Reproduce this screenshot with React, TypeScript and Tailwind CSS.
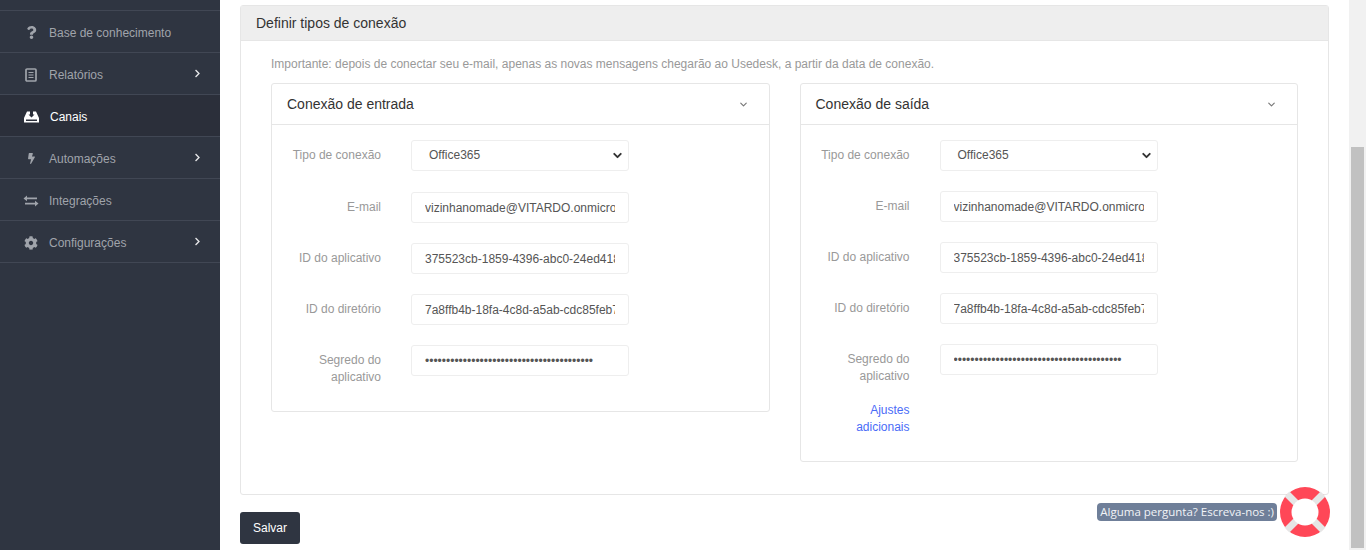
import { FaQuestion, FaBolt, FaCog, FaChevronRight } from "react-icons/fa"
import { ChevronDown } from "lucide-react"
import type { ReactNode } from "react"

const font = "font-['Liberation_Sans',Arial,sans-serif]"

const ReportIcon = () => (
  <svg width="12" height="14" viewBox="0 0 12 14" fill="none" stroke="currentColor">
    <rect x="1" y="1" width="10" height="12" rx="1" strokeWidth="1.7" />
    <path d="M3.5 4.5h5M3.5 7h5M3.5 9.5h5" strokeWidth="1.2" />
  </svg>
)

const SwapIcon = () => (
  <svg width="16" height="12" viewBox="0 0 16 12" fill="currentColor">
    <path d="M4 0.5v2h10v1.8H4v2L0.5 3.4z" />
    <path d="M12 5.7v2H2v1.8h10v2l3.5-2.9z" />
  </svg>
)

const TrayIcon = () => (
  <svg width="15" height="12" viewBox="0 0 15 12" fill="currentColor" fillRule="evenodd">
    <path d="M3 0.5h3v3H4.5L7.5 6.5l3-3H9v-3h3l3 6.5V11.5H0V7zM2 8.5v1.5h11V8.5z" />
  </svg>
)

const NAV: { label: string; icon: ReactNode; arrow?: boolean; active?: boolean }[] = [
  { label: "Base de conhecimento", icon: <FaQuestion size={13} /> },
  { label: "Relatórios", icon: <ReportIcon />, arrow: true },
  { label: "Canais", icon: <TrayIcon />, active: true },
  { label: "Automações", icon: <FaBolt size={11} />, arrow: true },
  { label: "Integrações", icon: <SwapIcon /> },
  { label: "Configurações", icon: <FaCog size={14} />, arrow: true },
]

const FIELDS = [
  { label: "E-mail", value: "vizinhanomade@VITARDO.onmicrosoft.com" },
  { label: "ID do aplicativo", value: "375523cb-1859-4396-abc0-24ed418f5a21" },
  { label: "ID do diretório", value: "7a8ffb4b-18fa-4c8d-a5ab-cdc85feb7e10" },
]

function Sidebar() {
  return (
    <aside className="w-[220px] shrink-0 bg-[#2f3541]">
      <div className="h-[11px] border-b border-[#414754]" />
      {NAV.map((item) => (
        <div
          key={item.label}
          className={`flex h-[42px] items-center border-b border-[#414754] pl-[23px] pr-[18px] pt-[2px] text-xs ${
            item.active ? "bg-[#2b2f3a] font-medium text-white" : "text-[#a0a4ab]"
          }`}
        >
          <span className="flex w-[16px] shrink-0 justify-center">{item.icon}</span>
          <span className={`flex-1 ${item.active ? "ml-[11px]" : "ml-[10px]"}`}>{item.label}</span>
          {item.arrow && <FaChevronRight size={9} className="-mt-[2px] text-[#e4e5e7]" />}
        </div>
      ))}
    </aside>
  )
}

function Row({ label, children }: { label: ReactNode; children?: ReactNode }) {
  return (
    <div className="flex items-start">
      <div className="w-[109px] shrink-0 pt-[7px] text-right text-xs leading-[17px] text-[#999]">{label}</div>
      <div className="ml-[30px] w-[218px]">{children}</div>
    </div>
  )
}

function TextInput({ value, type = "text" }: { value: string; type?: string }) {
  return (
    <input
      readOnly
      type={type}
      value={value}
      className="block h-[31px] w-full rounded-[3px] border border-[#eeeeee] bg-white px-[13px] text-xs text-[#555] outline-none"
    />
  )
}

function Panel({ title, extra }: { title: string; extra?: boolean }) {
  return (
    <section className="rounded-[3px] border border-[#e6e6e6]">
      <header className="flex h-[41px] items-center justify-between border-b border-[#e6e6e6] pl-[15px] pr-[20px]">
        <h3 className="text-sm text-[#333]">{title}</h3>
        <ChevronDown size={11} strokeWidth={2.5} className="text-[#777]" />
      </header>
      <div className="flex flex-col gap-[20px] pt-[15px] pb-[25px]">
        <div className={extra ? "" : "mb-[1px]"}>
          <Row label="Tipo de conexão">
            <div className="flex h-[31px] items-center justify-between rounded-[3px] border border-[#eeeeee] bg-white pb-[1px] pl-[17px] pr-[4px] text-xs text-[#555]">
              Office365
              <ChevronDown size={13} strokeWidth={3.5} className="text-[#333]" />
            </div>
          </Row>
        </div>
        {FIELDS.map((f) => (
          <Row key={f.label} label={f.label}>
            <TextInput value={f.value} />
          </Row>
        ))}
        <Row label={<>Segredo do<br />aplicativo</>}>
          <TextInput type="password" value="abcdefghijklmnopqrstuvwxyz0123456789abcd" />
        </Row>
        {extra && (
          <div className="-mt-[10px]">
            <Row label={<span className="text-[#4a6cf7]">Ajustes<br />adicionais</span>} />
          </div>
        )}
      </div>
    </section>
  )
}

export default function App() {
  return (
    <div className={`relative flex h-[550px] w-full overflow-hidden bg-white ${font}`}>
      <Sidebar />
      <main className="flex min-w-0 flex-1 flex-col px-5 pt-[5px]">
        <div className="h-[490px] rounded-[3px] border border-[#e6e6e6]">
          <div className="flex h-[35px] items-center border-b border-[#e6e6e6] bg-[#eeeeee] pl-[15px] text-sm text-[#333]">
            Definir tipos de conexão
          </div>
          <div className="px-[30px] pt-[16px]">
            <p className="text-xs leading-[14px] text-[#999]">
              Importante: depois de conectar seu e-mail, apenas as novas mensagens chegarão ao Usedesk, a partir da data de conexão.
            </p>
            <div className="mt-[12px] grid grid-cols-2 items-start gap-[30px]">
              <Panel title="Conexão de entrada" />
              <Panel title="Conexão de saída" extra />
            </div>
          </div>
        </div>
        <button className="mt-[17px] h-[32px] w-[60px] rounded-[3px] bg-[#2f3541] text-xs font-medium text-white">Salvar</button>
      </main>
      <div className="w-[17px] shrink-0 bg-[#f1f1f1] px-[2px] pt-[147px] pb-[2px]">
        <div className="h-full bg-[#c1c1c1]" />
      </div>
      {/* floating help widget */}
      <div className="absolute right-[36px] top-[487px] flex items-center">
        <span className="mr-[3px] flex h-[18px] items-center rounded-[4px] bg-[#6f7f99] px-[3px] font-['Open_Sans',sans-serif] text-[11.5px] font-medium text-[#f2f4f7]">
          Alguma pergunta? Escreva-nos :)
        </span>
        <svg width="50" height="50" viewBox="0 0 50 50">
          <circle cx="25" cy="25" r="25" fill="#ff4757" />
          <path d="M7 7l11 11M43 7L32 18M7 43l11-11M43 43L32 32" stroke="#e6e6e6" strokeWidth="7" />
          <circle cx="25" cy="25" r="13.5" fill="#fff" />
        </svg>
      </div>
    </div>
  )
}
